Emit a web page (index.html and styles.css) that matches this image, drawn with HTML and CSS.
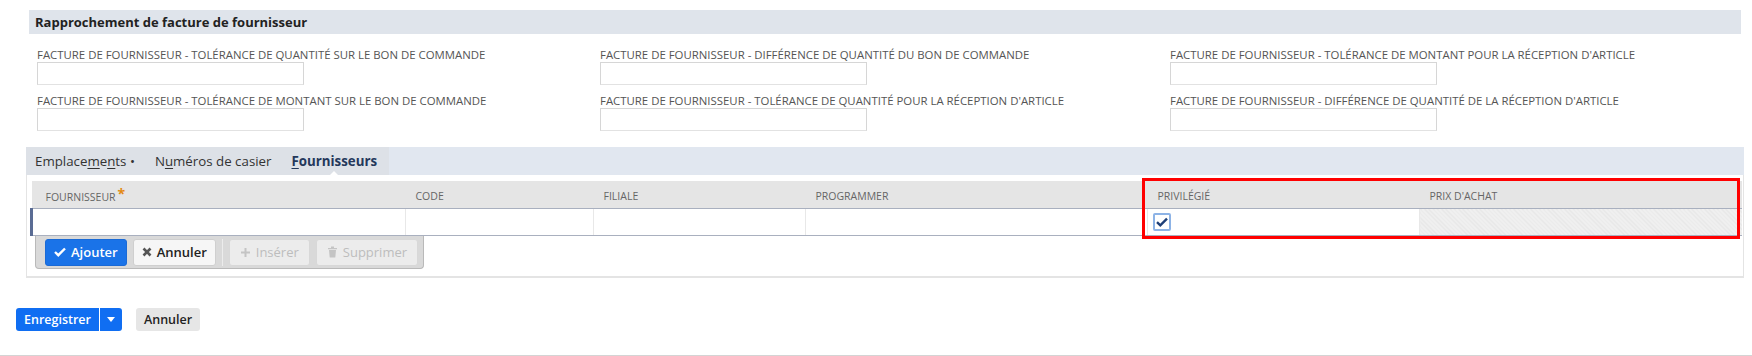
FILE: index.html
```html
<!DOCTYPE html>
<html lang="fr">
<head>
    <meta charset="UTF-8">
    <title>Rapprochement de facture de fournisseur</title>
    <link rel="stylesheet" href="styles.css">
</head>
<body>
    <div class="page">
        <div class="section-title">Rapprochement de facture de fournisseur</div>

        <div class="fields">
            <div class="field">
                <label>Facture de fournisseur - tolérance de quantité sur le bon de commande</label>
                <div class="input"></div>
            </div>
            <div class="field">
                <label>Facture de fournisseur - différence de quantité du bon de commande</label>
                <div class="input"></div>
            </div>
            <div class="field">
                <label>Facture de fournisseur - tolérance de montant pour la réception d'article</label>
                <div class="input"></div>
            </div>
            <div class="field">
                <label>Facture de fournisseur - tolérance de montant sur le bon de commande</label>
                <div class="input"></div>
            </div>
            <div class="field">
                <label>Facture de fournisseur - tolérance de quantité pour la réception d'article</label>
                <div class="input"></div>
            </div>
            <div class="field">
                <label>Facture de fournisseur - différence de quantité de la réception d'article</label>
                <div class="input"></div>
            </div>
        </div>

        <div class="tabs">
            <div class="tab-group">
                <span class="tab">Emplace<u>m</u>e<u>n</u>ts&nbsp;•</span>
                <span class="tab">N<u>u</u>méros de casier</span>
                <span class="tab active"><u>F</u>ournisseurs</span>
            </div>
        </div>

        <div class="panel">
            <table class="grid">
                <colgroup>
                    <col style="width:374px">
                    <col style="width:188px">
                    <col style="width:212px">
                    <col style="width:342px">
                    <col style="width:272px">
                    <col style="width:322px">
                </colgroup>
                <thead>
                    <tr>
                        <th>Fournisseur<span class="req">*</span></th>
                        <th>Code</th>
                        <th>Filiale</th>
                        <th>Programmer</th>
                        <th>Privilégié</th>
                        <th>Prix d'achat</th>
                    </tr>
                </thead>
                <tbody>
                    <tr>
                        <td class="first"></td>
                        <td></td>
                        <td></td>
                        <td></td>
                        <td class="check-cell">
                            <span class="checkbox">
                                <svg width="12" height="10" viewBox="0 0 12 10"><path d="M1 5.2 L4.3 8.3 L11 1.6" fill="none" stroke="#1e3f78" stroke-width="2.4"/></svg>
                            </span>
                        </td>
                        <td class="disabled"></td>
                    </tr>
                </tbody>
            </table>

            <div class="row-actions">
                <button class="btn primary">
                    <svg width="12" height="10" viewBox="0 0 12 10"><path d="M1 5 L4.3 8.2 L11 1.5" fill="none" stroke="#fff" stroke-width="2.4"/></svg>
                    Ajouter
                </button>
                <button class="btn">
                    <svg width="10" height="10" viewBox="0 0 10 10"><path d="M1.5 1.5 L8.5 8.5 M8.5 1.5 L1.5 8.5" stroke="#555" stroke-width="2.6"/></svg>
                    Annuler
                </button>
                <span class="sep"></span>
                <button class="btn off">
                    <svg width="11" height="11" viewBox="0 0 11 11"><path d="M5.5 1 V10 M1 5.5 H10" stroke="#c4c4c4" stroke-width="2"/></svg>
                    Insérer
                </button>
                <button class="btn off">
                    <svg width="11" height="12" viewBox="0 0 11 12"><path d="M1 2 H10 V3.2 H1 Z M4 0.6 H7 V2 H4 Z M2 4 H9 L8.3 11.5 H2.7 Z" fill="#c4c4c4"/></svg>
                    Supprimer
                </button>
            </div>
        </div>

        <div class="form-actions">
            <div class="split">
                <button class="save">Enregistrer</button>
                <button class="save caret">
                    <svg width="8" height="5" viewBox="0 0 8 5"><path d="M0 0 H8 L4 5 Z" fill="#fff"/></svg>
                </button>
            </div>
            <button class="cancel">Annuler</button>
        </div>

        <div class="highlight"></div>
    </div>
</body>
</html>
```
FILE: styles.css
```css
body {
    margin: 0;
    font-family: "Open Sans", "Liberation Sans", sans-serif;
    color: #333;
    background: #fff;
}
.page {
    position: relative;
    height: 356px;
    box-sizing: border-box;
    padding-top: 10px;
    border-bottom: 1px solid #d4d4d4;
}
.section-title {
    margin: 0 11px 0 29px;
    height: 24px;
    line-height: 24px;
    padding-left: 6px;
    background: #dfe4eb;
    font-size: 13px;
    font-weight: bold;
    color: #222;
}
.fields {
    display: grid;
    grid-template-columns: 563px 570px 1fr;
    row-gap: 8px;
    padding-left: 37px;
    margin-top: 13px;
}
.field label {
    display: block;
    font-size: 11.4px;
    line-height: 15px;
    color: #555;
    text-transform: uppercase;
    white-space: nowrap;
}
.field .input {
    width: 267px;
    height: 23px;
    box-sizing: border-box;
    border: 1px solid #d6d6d6;
    border-bottom-color: #e2e2e2;
    background: #fff;
}
.tabs {
    margin: 16px 8px 0 26px;
    height: 28px;
    background: #e1e7f0;
    display: flex;
}
.tab-group {
    display: flex;
    align-items: center;
    padding: 0 12px 0 9px;
    background: #dde1e7;
    gap: 20px;
}
.tab {
    font-size: 13.3px;
    color: #333;
    white-space: nowrap;
}
.tab u {
    text-underline-offset: 2px;
}
.tab.active {
    position: relative;
    font-weight: bold;
    color: #24385b;
    align-self: stretch;
    display: flex;
    align-items: center;
}
.tab.active::after {
    content: "";
    position: absolute;
    left: 50%;
    bottom: 0;
    margin-left: -4px;
    border: 4px solid transparent;
    border-bottom-color: #fff;
}
.panel {
    margin: 0 8px 0 26px;
    padding: 6px 3px 7px 3px;
    border: 1px solid #e4e4e4;
    border-top: none;
    border-bottom-width: 2px;
}
.grid {
    width: 1710px;
    border-collapse: collapse;
    table-layout: fixed;
}
.grid th {
    height: 25px;
    padding: 2px 0 0 10px;
    background: #e5e5e5;
    border-bottom: 1px solid #a9b0bf;
    font-size: 10.5px;
    font-weight: normal;
    color: #666;
    text-align: left;
    text-transform: uppercase;
}
.grid th:first-child {
    padding-left: 14px;
}
.req {
    color: #e38a12;
    font-size: 14px;
    font-weight: bold;
    position: relative;
    top: -2px;
    margin-left: 2px;
}
.grid td {
    height: 26px;
    padding: 0;
    border-right: 1px solid #e8e8e8;
    border-bottom: 1px solid #a9b0bf;
    background: #fff;
}
.grid td.first {
    border-left: 3px solid #5a6c94;
}
.grid td.disabled {
    border-right: none;
    background: repeating-linear-gradient(45deg, #e6e6e6 0 1px, #f0f0f0 1px 3px);
}
.check-cell {
    padding-left: 4px !important;
}
.checkbox {
    display: flex;
    align-items: center;
    justify-content: center;
    width: 18px;
    height: 18px;
    margin-left: 1px;
    box-sizing: border-box;
    border: 2px solid #8db3e6;
    border-radius: 2px;
    background: #fff;
}
.row-actions {
    display: flex;
    align-items: center;
    gap: 6px;
    width: 389px;
    height: 33px;
    box-sizing: border-box;
    margin-left: 5px;
    padding: 0 6px 0 9px;
    background: #d9d9d9;
    border: 1px solid #b9b9b9;
    border-top: none;
    border-radius: 0 0 4px 4px;
}
.btn {
    display: flex;
    align-items: center;
    gap: 5px;
    height: 27px;
    padding: 0 8px;
    border: 1px solid #cfcfcf;
    border-radius: 3px;
    background: #f6f6f6;
    font-family: inherit;
    font-size: 13px;
    font-weight: 600;
    color: #222;
}
.btn.primary {
    background: #1a73e8;
    border-color: #1a6ad6;
    color: #fff;
}
.btn.off {
    padding: 0 10px;
    color: #bdbdbd;
    background: #ececec;
    border-color: #d8d8d8;
    font-weight: normal;
}
.sep {
    width: 1px;
    height: 27px;
    background: #c4c4c4;
    border-right: 1px solid #ececec;
}
.form-actions {
    display: flex;
    align-items: center;
    gap: 14px;
    margin-top: 30px;
    padding-left: 16px;
}
.split {
    display: flex;
    gap: 1px;
}
.save, .cancel {
    height: 23px;
    border: none;
    border-radius: 3px;
    font-family: inherit;
    font-size: 12.5px;
    font-weight: 600;
    cursor: pointer;
}
.save {
    padding: 0 8px;
    background: #106ef2;
    color: #fff;
    border-radius: 3px 0 0 3px;
}
.save.caret {
    width: 22px;
    padding: 0;
    border-radius: 0 3px 3px 0;
    display: flex;
    align-items: center;
    justify-content: center;
}
.cancel {
    padding: 0 8px;
    background: #e6e6e6;
    color: #222;
}
.highlight {
    position: absolute;
    left: 1142px;
    top: 178px;
    width: 598px;
    height: 61px;
    box-sizing: border-box;
    border: 3px solid #ff0000;
}
```
